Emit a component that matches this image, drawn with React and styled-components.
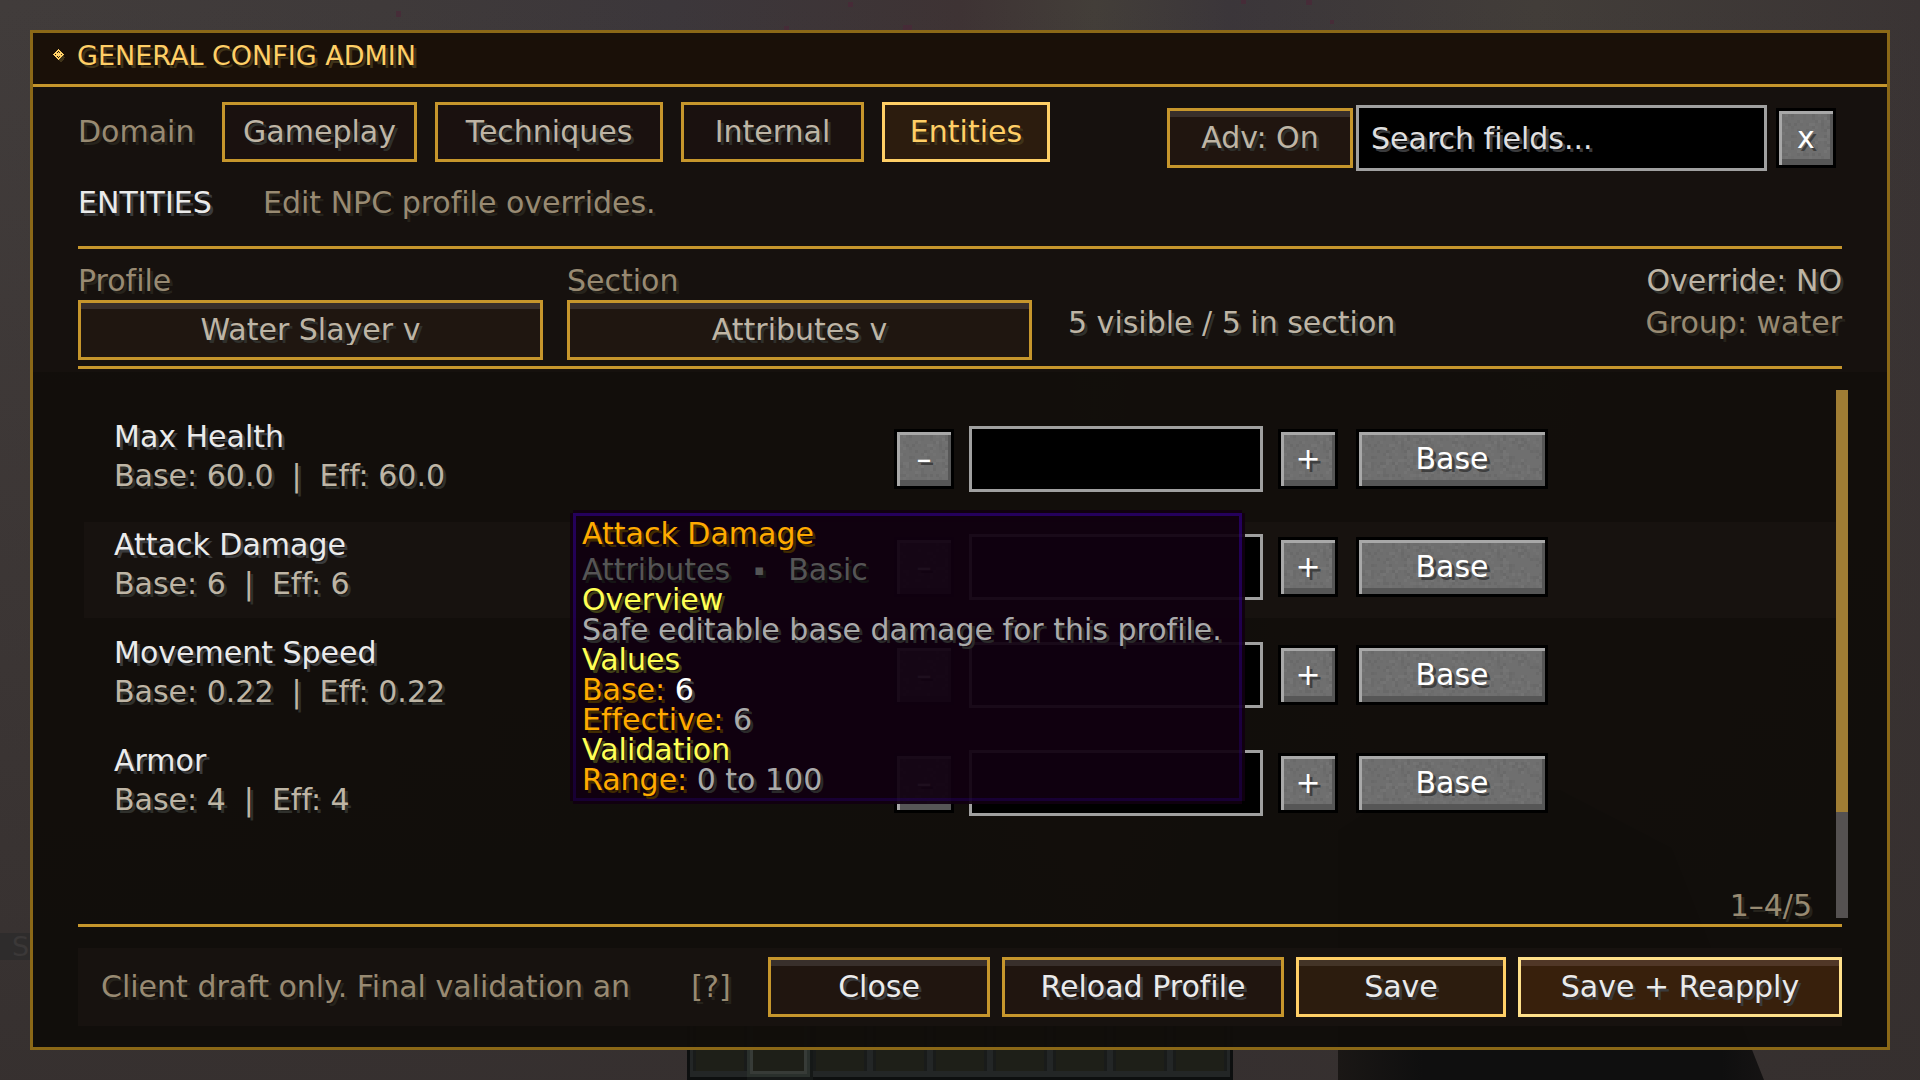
import React, { useState } from "react";
import styled, { createGlobalStyle, css } from "styled-components";

const tabs = [
  { name: "Gameplay", width: 195 },
  { name: "Techniques", width: 228 },
  { name: "Internal", width: 183 },
  { name: "Entities", width: 168 },
];

const fields = [
  { name: "Max Health", base: "60.0", eff: "60.0" },
  { name: "Attack Damage", base: "6", eff: "6", hovered: true },
  { name: "Movement Speed", base: "0.22", eff: "0.22" },
  { name: "Armor", base: "4", eff: "4" },
];

// speckled stone used by the grey buttons
const stoneTile = () => {
  const shades = ["#6b6b6b", "#727272", "#6d6d6d", "#747474", "#696969"];
  let seed = 7;
  let rects = "";
  for (let y = 0; y < 54; y += 3) {
    for (let x = 0; x < 96; x += 3) {
      seed = (seed * 1103515245 + 12345) % 2147483648;
      if (seed % 100 < 42) {
        const fill = shades[Math.floor(seed / 1000) % 5];
        rects += `<rect x='${x}' y='${y}' width='3' height='3' fill='${fill}'/>`;
      }
    }
  }
  const svg = `<svg xmlns='http://www.w3.org/2000/svg' width='96' height='54' shape-rendering='crispEdges'><rect width='96' height='54' fill='#6f6f6f'/>${rects}</svg>`;
  return `url("data:image/svg+xml,${encodeURIComponent(svg).replace(/'/g, "%27")}")`;
};
const stone = stoneTile();

const World = () => (
  <Backdrop viewBox="0 0 1920 1080" preserveAspectRatio="none" aria-hidden="true">
    <defs>
      <linearGradient id="sky" x1="0" y1="0" x2="1" y2="0">
        <stop offset="0" stopColor="#413c3b" />
        <stop offset="0.2" stopColor="#3f3a3a" />
        <stop offset="0.35" stopColor="#3c373b" />
        <stop offset="0.5" stopColor="#3e3334" />
        <stop offset="0.57" stopColor="#433e39" />
        <stop offset="0.64" stopColor="#3b363a" />
        <stop offset="0.8" stopColor="#423d39" />
        <stop offset="1" stopColor="#3a3434" />
      </linearGradient>
      <linearGradient id="ground" x1="0" y1="0" x2="0" y2="1">
        <stop offset="0" stopColor="#38302f" stopOpacity="0" />
        <stop offset="1" stopColor="#352f2e" stopOpacity="0.9" />
      </linearGradient>
      <linearGradient id="shade" x1="0" y1="0" x2="1" y2="0">
        <stop offset="0" stopColor="#1a1715" />
        <stop offset="0.2" stopColor="#0f0f0f" />
        <stop offset="0.9" stopColor="#0f0f0f" />
        <stop offset="1" stopColor="#151313" />
      </linearGradient>
    </defs>
    <rect width="1920" height="1080" fill="url(#sky)" />
    <rect width="1920" height="1080" fill="url(#ground)" />
    <g fill="#4a2838" opacity="0.7">
      <rect x="396" y="11" width="5" height="6" />
      <rect x="848" y="2" width="5" height="5" />
      <rect x="784" y="26" width="5" height="4" />
      <rect x="903" y="25" width="9" height="5" />
      <rect x="1241" y="0" width="5" height="4" />
      <rect x="1306" y="0" width="6" height="5" />
      <rect x="1330" y="20" width="4" height="4" />
    </g>
    <path d="M1338 1080V830L1400 790H1560L1672 848L1764 1080Z" fill="url(#shade)" />
    <g shapeRendering="crispEdges">
      <rect x="687" y="1014" width="546" height="66" fill="#0d0f0f" />
      <rect x="690" y="1017" width="540" height="60" fill="#232626" />
      {[0, 1, 2, 3, 4, 5, 6, 7, 8].map((i) => (
        <g key={i}>
          <rect x={693 + i * 60} y="1020" width="54" height="51" fill="#191b1a" />
          <rect x={696 + i * 60} y="1023" width="48" height="48" fill="#1e1f18" />
        </g>
      ))}
      <rect x="747" y="1011" width="66" height="69" fill="#151817" />
      <rect x="747" y="1014" width="63" height="63" fill="#2a302c" />
      <rect x="750" y="1017" width="57" height="57" fill="#373b37" />
      <rect x="753" y="1020" width="51" height="51" fill="#1e1f18" />
    </g>
  </Backdrop>
);

const Gem = () => (
  <GemIcon viewBox="0 0 12 13" shapeRendering="crispEdges" aria-hidden="true">
    <path
      fill="#3f3319"
      d="M6 2h2v1h1v1h1v2h1v2h1v1h-1v2h-1v1H9v1H7v-1H6z"
    />
    <path
      fill="#ffcf66"
      fillRule="evenodd"
      d="M5 0h1v1h1v1h1v1h1v1h1v1h1v1h-1v1H9v1H8v1H7v1H6v1H5v-1H4V9H3V8H2V7H1V6H0V5h1V4h1V3h1V2h1V1h1zM5 2v1H4v1h1V3h1v1h1V3H6V2zM2 5v1h1V5zM8 5v1h1V5zM4 7v1h1v1h1V8h1V7H6v1H5V7z"
    />
  </GemIcon>
);

const App = () => {
  const [active, setActive] = useState("Entities");

  return (
    <Screen>
      <GlobalStyle />
      <World />
      <ChatLine aria-hidden="true">S</ChatLine>
      <Panel>
        <Header>
          <Gem />
          <Title>GENERAL CONFIG ADMIN</Title>
        </Header>

        <Top>
          <Toolbar>
            <Tabs>
              <Domain>Domain</Domain>
              {tabs.map((tab) => (
                <Tab
                  key={tab.name}
                  type="button"
                  $width={tab.width}
                  $active={tab.name === active}
                  onClick={() => setActive(tab.name)}
                >
                  {tab.name}
                </Tab>
              ))}
            </Tabs>
            <Tools>
              <GoldButton type="button" $width={186} $tone="cream">
                Adv: On
              </GoldButton>
              <Search type="text" placeholder="Search fields..." aria-label="Search fields" />
              <StoneButton type="button" aria-label="Clear search">
                x
              </StoneButton>
            </Tools>
          </Toolbar>

          <Intro>
            <Heading>ENTITIES</Heading>
            <Text $tone="muted">Edit NPC profile overrides.</Text>
          </Intro>

          <Divider />

          <Filters>
            <Field>
              <Label htmlFor="profile">Profile</Label>
              <Select id="profile">
                <option>Water Slayer v</option>
              </Select>
            </Field>
            <Field>
              <Label htmlFor="section">Section</Label>
              <Select id="section">
                <option>Attributes v</option>
              </Select>
            </Field>
            <Count>5 visible / 5 in section</Count>
            <Status>
              <Text $tone="cream">Override: NO</Text>
              <Text $tone="muted">Group: water</Text>
            </Status>
          </Filters>

          <Divider />
        </Top>

        <ListArea>
          <List>
            {fields.map((field) => (
              <Row key={field.name} $hovered={field.hovered}>
                <Names>
                  <Text $tone="white">{field.name}</Text>
                  <Values>
                    <span>Base: {field.base}</span>
                    <span>|</span>
                    <span>Eff: {field.eff}</span>
                  </Values>
                </Names>
                <Controls>
                  <StoneButton type="button" aria-label={`Decrease ${field.name}`}>
                    –
                  </StoneButton>
                  <ValueInput type="text" aria-label={field.name} />
                  <StoneButton type="button" aria-label={`Increase ${field.name}`}>
                    +
                  </StoneButton>
                  <BaseButton type="button">Base</BaseButton>
                </Controls>
                {field.hovered && (
                  <Tooltip role="tooltip">
                    <TipTitle>Attack Damage</TipTitle>
                    <TipPath>
                      <span>Attributes</span>
                      <Bullet>▪</Bullet>
                      <span>Basic</span>
                    </TipPath>
                    <Text $tone="yellow">Overview</Text>
                    <Text $tone="gray">Safe editable base damage for this profile.</Text>
                    <Text $tone="yellow">Values</Text>
                    <Text $tone="orange">
                      Base: <Tone $tone="bright">6</Tone>
                    </Text>
                    <Text $tone="orange">
                      Effective: <Tone $tone="gray">6</Tone>
                    </Text>
                    <Text $tone="yellow">Validation</Text>
                    <Text $tone="orange">
                      Range: <Tone $tone="gray">0 to 100</Tone>
                    </Text>
                  </Tooltip>
                )}
              </Row>
            ))}
            <Pager>1–4/5</Pager>
          </List>
          <Track>
            <Thumb />
          </Track>
        </ListArea>

        <Bottom>
          <Divider />
          <Footer>
            <Notice>Client draft only. Final validation an</Notice>
            <Help type="button" aria-label="Help">
              [?]
            </Help>
            <Actions>
              <GoldButton type="button" $width={222}>
                Close
              </GoldButton>
              <GoldButton type="button" $width={282}>
                Reload Profile
              </GoldButton>
              <GoldButton type="button" $width={210} $kind="primary">
                Save
              </GoldButton>
              <GoldButton type="button" $width={324} $kind="strong">
                Save + Reapply
              </GoldButton>
            </Actions>
          </Footer>
        </Bottom>
      </Panel>
    </Screen>
  );
};

export default App;

const tones = {
  gold: ["#ffcf66", "#3f3319"],
  cream: ["#beb5a5", "#2f302c"],
  muted: ["#988a72", "#26231c"],
  white: ["#ebebeb", "#3a3b3d"],
  bright: ["#ffffff", "#3f3f3f"],
  orange: ["#ffaa00", "#402a00"],
  yellow: ["#ffff55", "#3f3f15"],
  gray: ["#aaaaaa", "#2a2a2a"],
  dim: ["#555555", "#151515"],
};

const tone = (name) => css`
  color: ${tones[name][0]};
  text-shadow: 3px 3px 0 ${tones[name][1]};
`;

const kinds = {
  normal: { border: "#c6962c", back: "#20150f", shine: "#382f2b" },
  primary: { border: "#ffcf66", back: "#2c1c0e", shine: "#433427" },
  strong: { border: "#ffe08a", back: "#38200c", shine: "#503727" },
};

const GlobalStyle = createGlobalStyle`
  * {
    box-sizing: border-box;
  }
  body {
    margin: 0;
    background: #3b3535;
  }
  body, button, input, select {
    font-family: "DejaVu Sans", sans-serif;
    font-size: 30px;
    line-height: 30px;
    font-variant-ligatures: none;
  }
  button, input, select {
    margin: 0;
    outline: none;
    border-radius: 0;
  }
  button {
    cursor: pointer;
  }
`;

const Screen = styled.div`
  position: relative;
  display: flex;
  min-height: 100vh;
  padding: 30px;
  overflow: hidden;
`;

const Backdrop = styled.svg`
  position: absolute;
  inset: 0;
  width: 100%;
  height: 100%;
`;

const ChatLine = styled.div`
  position: absolute;
  left: 0;
  bottom: 120px;
  width: 30px;
  height: 27px;
  padding-left: 12px;
  font-size: 27px;
  line-height: 27px;
  color: #3b3838;
  background: #2e2c2c;
`;

const Panel = styled.main`
  position: relative;
  flex: 1;
  display: flex;
  flex-direction: column;
  min-width: 0;
  border: 3px solid #8b6817;
  background: rgba(17, 13, 10, 0.97);
`;

const Header = styled.header`
  display: flex;
  align-items: center;
  height: 54px;
  padding: 0 20px 6px;
  border-bottom: 3px solid #c6962c;
  background: #1a1008;
`;

const GemIcon = styled.svg`
  width: 12px;
  height: 13px;
  margin-right: 12px;
`;

const Title = styled.h1`
  margin: 0;
  font-size: 27px;
  font-weight: 400;
  line-height: 30px;
  ${tone("gold")}
`;

const Top = styled.section`
  padding: 15px 45px 3px;
  background: #16110e;
`;

const Toolbar = styled.div`
  display: flex;
  justify-content: space-between;
  align-items: flex-start;
`;

const Tabs = styled.nav`
  display: flex;
  align-items: center;
  gap: 18px;
`;

const Domain = styled.span`
  width: 126px;
  ${tone("muted")}
`;

const Tab = styled.button`
  width: ${(p) => p.$width}px;
  height: 60px;
  padding: 0;
  border: 3px solid ${(p) => (p.$active ? "#ffcf66" : "#c6962c")};
  background: ${(p) => (p.$active ? "#2c1c0e" : "#1a110f")};
  ${(p) => tone(p.$active ? "gold" : "cream")}
`;

const Tools = styled.div`
  display: flex;
  align-items: center;
  margin-top: 3px;
  padding-right: 6px;
`;

const GoldButton = styled.button`
  width: ${(p) => p.$width}px;
  height: 60px;
  padding: 0;
  border: 3px solid ${(p) => kinds[p.$kind || "normal"].border};
  background: ${(p) => kinds[p.$kind || "normal"].back};
  box-shadow: inset 0 6px 0 ${(p) => kinds[p.$kind || "normal"].shine};
  white-space: nowrap;
  ${(p) => tone(p.$tone || "white")}
`;

const StoneButton = styled.button`
  width: 60px;
  height: 60px;
  padding: 0;
  border: 3px solid #000;
  background: ${stone};
  box-shadow:
    inset 0 3px 0 #a8a8a8,
    inset 3px 0 0 #a8a8a8,
    inset -3px 0 0 #565656,
    inset 0 -6px 0 #565656;
  ${tone("bright")}
`;

const BaseButton = styled(StoneButton)`
  width: 192px;
  margin-left: 3px;
`;

const TextBox = styled.input`
  height: 66px;
  padding: 0 12px;
  border: 3px solid #a0a0a0;
  background: #000;
  ${tone("white")}
`;

const Search = styled(TextBox)`
  width: 411px;
  margin: 0 9px 0 3px;
  &::placeholder {
    opacity: 1;
    color: #e0e0e0;
  }
`;

const ValueInput = styled(TextBox)`
  width: 294px;
`;

const Intro = styled.div`
  display: flex;
  margin: 17px 0 28px;
`;

const Heading = styled.h2`
  width: 185px;
  margin: 0;
  font-size: 30px;
  font-weight: 400;
  ${tone("white")}
`;

const Text = styled.div`
  white-space: nowrap;
  ${(p) => tone(p.$tone)}
`;

const Tone = styled.span`
  ${(p) => tone(p.$tone)}
`;

const Divider = styled.hr`
  height: 3px;
  margin: 0;
  border: 0;
  background: #c6962c;
`;

const Filters = styled.div`
  display: flex;
  align-items: flex-start;
  padding: 17px 0 6px;
`;

const Field = styled.div`
  display: flex;
  flex-direction: column;
  gap: 4px;
  width: 465px;
  margin-right: 24px;
`;

const Label = styled.label`
  ${tone("muted")}
`;

const Select = styled.select`
  appearance: none;
  height: 60px;
  padding: 0;
  border: 3px solid #c6962c;
  background: #1f1610;
  box-shadow: inset 0 6px 0 #382f2b;
  text-align: center;
  text-align-last: center;
  ${tone("cream")}
`;

const Count = styled.div`
  margin: 42px 0 0 12px;
  ${tone("cream")}
`;

const Status = styled.div`
  display: flex;
  flex-direction: column;
  gap: 12px;
  margin-left: auto;
  text-align: right;
`;

const ListArea = styled.section`
  flex: 1;
  display: flex;
  padding: 18px 39px 6px 51px;
`;

const List = styled.div`
  flex: 1;
  display: flex;
  flex-direction: column;
  gap: 12px;
  padding-top: 24px;
`;

const Row = styled.div`
  position: relative;
  display: flex;
  align-items: flex-start;
  height: 96px;
  padding: 0 288px 0 30px;
  background: ${(p) => (p.$hovered ? "#17120f" : "transparent")};
`;

const Names = styled.div`
  flex: 1;
  display: flex;
  flex-direction: column;
  gap: 9px;
  padding-top: 8px;
`;

const Values = styled.div`
  display: flex;
  gap: 18px;
  ${tone("cream")}
`;

const Controls = styled.div`
  display: flex;
  align-items: center;
  gap: 15px;
  margin-top: 12px;
`;

const Tooltip = styled.div`
  position: absolute;
  z-index: 2;
  top: -9px;
  left: 489px;
  width: 669px;
  padding: 3px 6px;
  border: 3px solid;
  border-image: linear-gradient(rgba(80, 0, 255, 0.32), rgba(40, 0, 127, 0.32)) 1;
  background: rgba(16, 0, 16, 0.94);
  box-shadow:
    0 -3px 0 rgba(16, 0, 16, 0.94),
    0 3px 0 rgba(16, 0, 16, 0.94),
    -3px 0 0 rgba(16, 0, 16, 0.94),
    3px 0 0 rgba(16, 0, 16, 0.94);
`;

const TipTitle = styled.div`
  margin-bottom: 6px;
  ${tone("orange")}
`;

const TipPath = styled.div`
  display: flex;
  gap: 24px;
  ${tone("dim")}
`;

const Bullet = styled.span`
  font-size: 15px;
`;

const Pager = styled.div`
  margin-top: auto;
  padding-right: 24px;
  line-height: 24px;
  text-align: right;
  ${tone("muted")}
`;

const Track = styled.div`
  width: 12px;
  background: #555151;
`;

const Thumb = styled.div`
  height: 80%;
  background: #a07d34;
`;

const Bottom = styled.section`
  padding: 0 45px 21px;
`;

const Footer = styled.footer`
  display: flex;
  align-items: center;
  height: 78px;
  margin-top: 21px;
  padding-left: 23px;
  background: #17120f;
`;

const Notice = styled.div`
  flex: 1;
  white-space: nowrap;
  ${tone("muted")}
`;

const Help = styled.button`
  width: 42px;
  margin-right: 36px;
  padding: 0;
  border: 0;
  background: none;
  ${tone("muted")}
`;

const Actions = styled.div`
  display: flex;
  gap: 12px;
`;
